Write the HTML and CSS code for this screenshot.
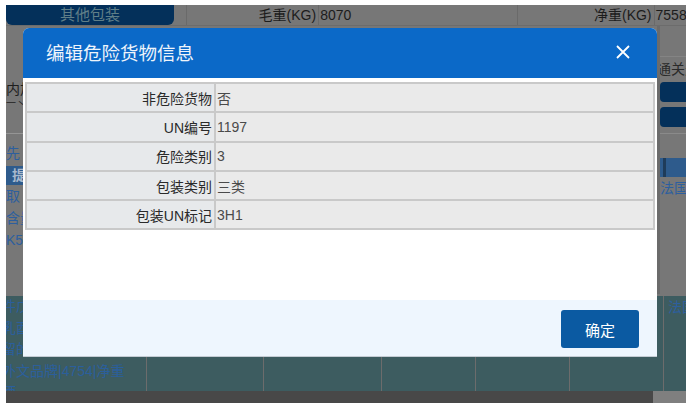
FILE: index.html
```html
<!DOCTYPE html>
<html lang="zh-CN">
<head>
	<meta charset="UTF-8">
	<title>编辑危险货物信息</title>
	<link rel="stylesheet" href="styles.css">
</head>
<body>
	<div class="page">
		<div class="top-row">
			<div class="pkg-btn">其他包装</div>
			<div class="top-cell lbl w1">毛重(KG)</div>
			<div class="top-cell val w2">8070</div>
			<div class="top-cell lbl w3">净重(KG)</div>
			<div class="top-cell val">7558</div>
		</div>

		<div class="mid">
			<div class="left-strip">
				<div class="ls-gap1"></div>
				<div class="dark-txt">内加</div>
				<div class="dark-txt small">一丶</div>
				<div class="ls-line"></div>
				<div class="blue-txt first">先</div>
				<div class="head-strip">提</div>
				<div class="blue-txt">取</div>
				<div class="blue-txt">含量</div>
				<div class="blue-txt">K5|</div>
			</div>
			<div class="mid-fill"></div>
			<div class="right-strip">
				<div class="rs-gap1"></div>
				<div class="dark-txt">通关天</div>
				<div class="nav-btn"></div>
				<div class="nav-btn"></div>
				<div class="rs-line"></div>
				<div class="head-strip"><span class="div-bar"></span></div>
				<div class="blue-txt">法国</div>
			</div>
		</div>

		<div class="goods-rows">
			<div class="gcol c1">件戊醇<br>乳酉<br>留的<br>外文品牌|4754|净重<br>酒</div>
			<div class="gcol c2"></div>
			<div class="gcol c3"></div>
			<div class="gcol c4"></div>
			<div class="gcol c5"></div>
			<div class="gcol c6"></div>
			<div class="gcol c7"><span class="blue-txt">法国</span></div>
		</div>

		<div class="bottom-bar">
			<div class="bottom-fill"></div>
			<div class="bottom-scroll"></div>
		</div>
	</div>

	<div class="dialog">
		<div class="dialog-head">
			<span class="dialog-title">编辑危险货物信息</span>
			<svg class="dialog-close" width="14" height="14" viewBox="0 0 14 14">
				<path d="M1 1 L13 13 M13 1 L1 13" stroke="#fff" stroke-width="1.8" fill="none"/>
			</svg>
		</div>
		<div class="dialog-body">
			<table class="info-table">
				<tr><td class="k">非危险货物</td><td class="v">否</td></tr>
				<tr><td class="k">UN编号</td><td class="v">1197</td></tr>
				<tr><td class="k">危险类别</td><td class="v">3</td></tr>
				<tr><td class="k">包装类别</td><td class="v">三类</td></tr>
				<tr><td class="k">包装UN标记</td><td class="v">3H1</td></tr>
			</table>
		</div>
		<div class="dialog-foot">
			<button class="btn-ok">确定</button>
		</div>
	</div>
</body>
</html>
```

FILE: styles.css
```css
* {
	margin: 0;
	padding: 0;
	box-sizing: border-box;
}
body {
	background: #fff;
	font-family: "Liberation Sans", "Noto Sans CJK SC", sans-serif;
	font-size: 14px;
	color: #222;
	width: 696px;
	height: 403px;
	overflow: hidden;
	position: relative;
}

/* dimmed page behind the dialog */
.page {
	margin: 5px 10px 0 6px;
	height: 398px;
	background: #777;
	display: flex;
	flex-direction: column;
	overflow: hidden;
}
.top-row {
	height: 21px;
	display: flex;
	border-bottom: 1px solid #6c6c6c;
	flex: none;
}
.pkg-btn {
	width: 172px;
	background: #04305a;
	border-radius: 0 0 6px 6px;
	color: #607f88;
	font-size: 15px;
	line-height: 20px;
	text-align: center;
}
.top-cell {
	line-height: 20px;
	white-space: nowrap;
	overflow: hidden;
	color: #1c1c1c;
}
.top-cell.lbl {
	text-align: right;
	padding-right: 2px;
	border-right: 1px solid #6a6a6a;
}
.top-cell.val {
	padding-left: 1px;
}
.w1 {
	width: 136px;
	margin-left: 12px;
	border-left: 1px solid #6a6a6a;
}
.w2 {
	width: 202px;
}
.w3 {
	width: 141px;
	border-left: 1px solid #6a6a6a;
}

.mid {
	height: 268px;
	display: flex;
	flex: none;
}
.left-strip {
	width: 17px;
	overflow: hidden;
	white-space: nowrap;
}
.mid-fill {
	flex: 1;
}
.right-strip {
	width: 29px;
	overflow: hidden;
	white-space: nowrap;
	border-left: 3px solid #6b6b6b;
}
.ls-gap1 {
	height: 56px;
}
.rs-gap1 {
	height: 31px;
	border-bottom: 1px solid #848484;
	margin-left: -3px;
}
.dark-txt {
	color: #1e1e1e;
	line-height: 15px;
	font-size: 14px;
}
.right-strip .dark-txt {
	margin-top: 5px;
	margin-left: -3px;
	color: #2a2a2a;
}
.dark-txt.small {
	height: 10px;
	line-height: 10px;
	font-size: 10px;
	margin-top: 2px;
	overflow: hidden;
}
.ls-line {
	height: 1px;
	background: #959595;
	margin-top: 24px;
}
.blue-txt {
	color: #2d5f9e;
	line-height: 22px;
	font-size: 14px;
	white-space: nowrap;
}
.blue-txt.first {
	margin-top: 8px;
}
.head-strip {
	height: 19px;
	background: #2e5b8c;
	color: #a8b8cc;
	line-height: 19px;
	font-weight: bold;
	padding-left: 6px;
	margin: 2px 0 0;
}
.right-strip .head-strip {
	margin-top: 24px;
}
.div-bar {
	display: block;
	width: 3px;
	height: 19px;
	background: #1f3c5a;
	margin-left: -3px;
}
.nav-btn {
	height: 20px;
	background: #04305a;
	border-radius: 4px 0 0 4px;
	margin-top: 5px;
}
.nav-btn:first-of-type {
	margin-top: 13px;
}
.rs-line {
	height: 1px;
	background: #8a8a8a;
	margin-top: 6px;
}

.goods-rows {
	height: 95px;
	display: flex;
	background: #3d5c60;
	flex: none;
	margin-top: 2px;
}
.gcol {
	border-right: 1px solid #6c6c6c;
	height: 100%;
}
.c1 {
	width: 145px;
	color: #2b5f9c;
	line-height: 21.5px;
	margin-left: -4px;
	font-size: 14px;
	white-space: nowrap;
	overflow: hidden;
}
.c2 { width: 117px; }
.c3 { width: 118px; }
.c4 { width: 94px; }
.c5 { width: 94px; }
.c6 { width: 94px; }
.c7 {
	flex: 1;
	border-right: none;
	padding-left: 4px;
	overflow: hidden;
	white-space: nowrap;
}

.bottom-bar {
	flex: 1;
	display: flex;
}
.bottom-fill {
	width: 647px;
	background: #484848;
}
.bottom-scroll {
	flex: 1;
	background: #7f7f7f;
}

/* dialog */
.dialog {
	position: absolute;
	left: 23px;
	top: 28px;
	width: 634px;
	height: 329px;
	background: #fff;
	border-radius: 6px 6px 0 0;
	border-bottom: 1px solid #c4ccd4;
	display: flex;
	flex-direction: column;
}
.dialog-head {
	height: 50px;
	background: #0b69c8;
	border-radius: 6px 6px 0 0;
	display: flex;
	align-items: center;
	justify-content: space-between;
	padding: 0 27px 0 23px;
	flex: none;
}
.dialog-title {
	color: #eef4fb;
	font-size: 18.5px;
	font-family: "Noto Sans CJK SC", sans-serif;
	margin-top: -2px;
}
.dialog-close {
	display: block;
	margin-top: -2px;
}
.dialog-body {
	flex: 1;
	padding: 4px 2px 0;
}
.info-table {
	width: 100%;
	border-collapse: collapse;
	border: 2px solid #cbcbcb;
	font-size: 14px;
}
.info-table td {
	height: 29.3px;
	border: 2px solid #c9c9c9;
	padding: 0 2px 0 1px;
	vertical-align: middle;
}
.info-table .k {
	width: 189px;
	text-align: right;
	background: #e7e9eb;
	color: #2a2a2a;
}
.info-table .v {
	background: #eaeaea;
	color: #4a4a4a;
}
.dialog-foot {
	height: 56px;
	background: #eef6fe;
	display: flex;
	justify-content: flex-end;
	align-items: flex-start;
	padding: 10px 18px 0 0;
	flex: none;
}
.btn-ok {
	width: 78px;
	height: 38px;
	border: none;
	border-radius: 3px;
	background: #0b5aa2;
	color: #fff;
	font-size: 15px;
	font-family: "Noto Sans CJK SC", sans-serif;
}
```
